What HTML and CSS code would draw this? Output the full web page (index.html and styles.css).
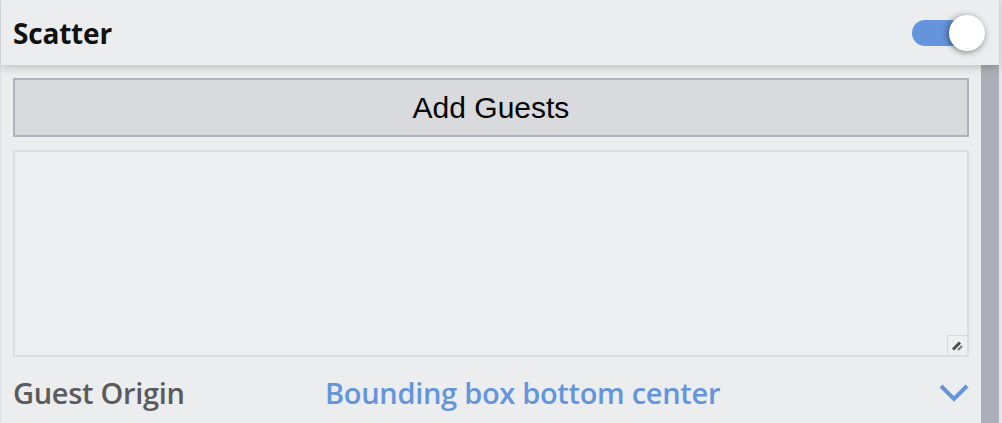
FILE: index.html
```html
<!DOCTYPE html>
<html>
<head>
<meta charset="utf-8">
<link rel="stylesheet" href="styles.css">
</head>
<body>
<div class="frame">
  <header class="header">
    <span class="title">Scatter</span>
    <span class="toggle"><span class="track"></span><span class="knob"></span></span>
  </header>
  <div class="body">
    <div class="content">
      <button class="add-btn">Add Guests</button>
      <div class="area-wrap">
        <textarea class="area"></textarea>
        <span class="grip">
          <svg width="11" height="11" viewBox="0 0 11 11"><path d="M1 9.5 L8 2.5" stroke="#4a4a4a" stroke-width="3"/><path d="M6 10 L10 6" stroke="#777" stroke-width="2"/></svg>
        </span>
      </div>
      <div class="field">
        <span class="label">Guest Origin</span>
        <span class="value">Bounding box bottom center</span>
        <svg class="chev" width="30" height="20" viewBox="0 0 30 20"><path d="M2 3 L15 16 L28 3" fill="none" stroke="#6495dc" stroke-width="4"/></svg>
      </div>
    </div>
    <div class="scrollbar"></div>
  </div>
</div>
</body>
</html>
```
FILE: styles.css
```css
html, body {
  margin: 0;
  padding: 0;
}
body {
  background: #ecedef;
  width: 1002px;
  height: 423px;
  overflow: hidden;
  font-family: "Open Sans", "Noto Sans", sans-serif;
}
.frame {
  border-left: 1px solid #dfe0e3;
  border-right: 3px solid #e4e5e8;
  height: 423px;
  box-sizing: border-box;
  display: flex;
  flex-direction: column;
}
.header {
  position: relative;
  z-index: 2;
  height: 65px;
  flex: none;
  display: flex;
  align-items: center;
  justify-content: space-between;
  padding: 0 12px 0 12px;
  background: #ecedef;
  box-shadow: 0 3px 8px rgba(0,0,0,0.18);
}
.title {
  font-weight: 700;
  font-size: 28px;
  color: #111;
  letter-spacing: -0.2px;
}
.toggle {
  position: relative;
  width: 76px;
  height: 36px;
  display: block;
}
.track {
  position: absolute;
  left: 1px;
  top: 5px;
  width: 52px;
  height: 26px;
  border-radius: 13px;
  background: #6495dc;
}
.knob {
  position: absolute;
  left: 38px;
  top: 0;
  width: 36px;
  height: 36px;
  border-radius: 50%;
  background: #fff;
  box-shadow: 0 2px 6px rgba(0,0,0,0.3), -3px 0 6px rgba(0,0,0,0.2);
}
.body {
  flex: 1;
  display: flex;
  min-height: 0;
}
.content {
  flex: 1;
  padding: 13px 12px 0 12px;
  display: flex;
  flex-direction: column;
  gap: 13px;
}
.scrollbar {
  width: 18px;
  flex: none;
  background: #adafb8;
}
.add-btn {
  height: 59px;
  width: 100%;
  border: 2px solid #b0b1ba;
  background: #d9dadd;
  font-family: "Liberation Sans", Arial, sans-serif;
  font-size: 30px;
  color: #000;
  padding: 0;
  margin: 0;
}
.area-wrap {
  position: relative;
  height: 207px;
}
.area {
  display: block;
  width: 100%;
  height: 100%;
  box-sizing: border-box;
  border: 2px solid #dcdddf;
  background: #eeeff0;
  resize: none;
  margin: 0;
  outline: none;
}
.grip {
  position: absolute;
  right: 2px;
  bottom: 2px;
  width: 19px;
  height: 19px;
  border-left: 1px solid #d6d7da;
  border-top: 1px solid #d6d7da;
  display: flex;
  align-items: center;
  justify-content: center;
}
.field {
  display: flex;
  align-items: center;
  height: 44px;
}
.label {
  width: 312px;
  flex: none;
  font-size: 29px;
  font-weight: 600;
  color: #5b5b5d;
  letter-spacing: -0.3px;
}
.value {
  flex: 1;
  font-size: 29px;
  font-weight: 600;
  color: #6495dc;
  letter-spacing: -0.3px;
}
.chev {
  flex: none;
  margin-top: 2px;
}
```
